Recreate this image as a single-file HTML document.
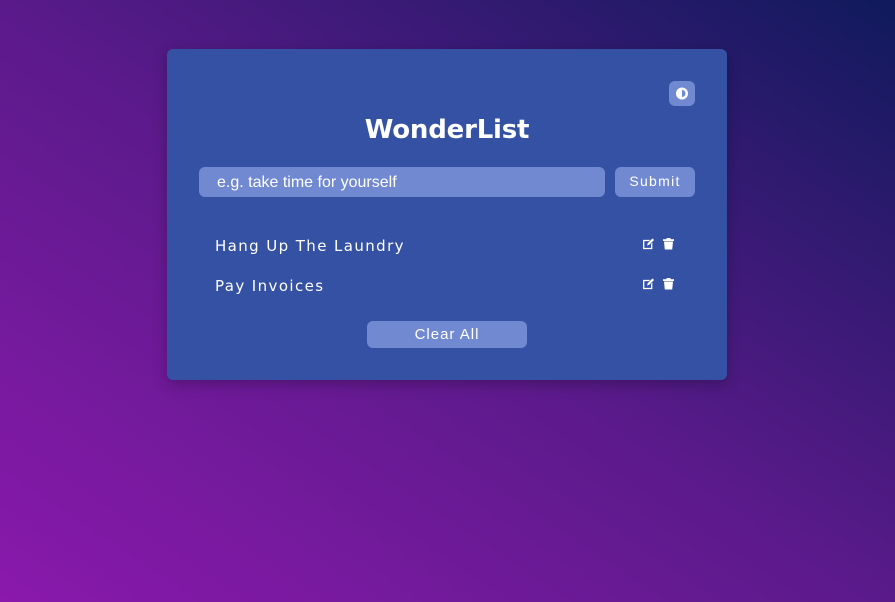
<!DOCTYPE html>
<html><head><style>
html,body{margin:0;width:895px;height:602px;overflow:hidden}
body{background:linear-gradient(to top right,#8a19ac 0%,#5a1a8a 50%,#101a5c 100%);font-family:"Liberation Sans","DejaVu Sans",sans-serif;position:relative}
.card{position:absolute;left:167px;top:49px;width:560px;height:331px;background:#3451a3;border-radius:6px;box-shadow:0 4px 14px rgba(0,0,0,.25)}
.tog{position:absolute;left:502px;top:32px;width:26px;height:25px;border-radius:6px;background:#7189d1}
h1{position:absolute;left:0;width:560px;top:66px;margin:0;text-align:center;color:#fff;font-family:"DejaVu Sans",sans-serif;font-size:26px;font-weight:bold;letter-spacing:-0.2px}
.inp{position:absolute;left:32px;top:118px;width:406px;height:30px;border-radius:6px;background:#7189d1;color:#fff;font-size:16px;line-height:31px;padding-left:18px;box-sizing:border-box}
.sub{position:absolute;left:448px;top:118px;width:80px;height:30px;border-radius:6px;background:#7189d1;color:#fff;font-size:14px;line-height:28px;text-align:center;letter-spacing:1.3px}
.item{position:absolute;left:48px;color:#fff;font-family:"DejaVu Sans",sans-serif;font-size:15px;letter-spacing:1.4px}
.ic{position:absolute;left:476px}
.clr{position:absolute;left:200px;top:272px;width:160px;height:27px;border-radius:6px;background:#7189d1;color:#fff;font-size:15px;line-height:27px;text-align:center;letter-spacing:1px}
</style></head><body>
<div class="card">
<div class="tog"><svg width="26" height="25" viewBox="0 0 26 25"><circle cx="13" cy="12.5" r="6" fill="#fff"/><path d="M13 9a3.5 3.5 0 0 1 0 7z" fill="#7189d1"/></svg></div>
<h1>WonderList</h1>
<div class="inp">e.g. take time for yourself</div>
<div class="sub">Submit</div>
<div class="item" style="top:188px">Hang Up The Laundry</div>
<div class="item" style="top:228px">Pay Invoices</div>
<svg class="ic" style="top:189px" width="32" height="12" viewBox="0 0 32 12"><rect x="0.7" y="2.5" width="8" height="8" fill="none" stroke="#fff" stroke-width="1.3"/><path d="M3.5 8l1-3 5-5 2 2-5 5z" fill="#fff" stroke="#3451a3" stroke-width=".6"/><rect x="20" y="1.2" width="11" height="1.8" fill="#fff"/><rect x="23.5" y="0" width="4" height="1.5" fill="#fff"/><path d="M21 3.5h9l-.8 8h-7.4z" fill="#fff"/></svg>
<svg class="ic" style="top:229px" width="32" height="12" viewBox="0 0 32 12"><rect x="0.7" y="2.5" width="8" height="8" fill="none" stroke="#fff" stroke-width="1.3"/><path d="M3.5 8l1-3 5-5 2 2-5 5z" fill="#fff" stroke="#3451a3" stroke-width=".6"/><rect x="20" y="1.2" width="11" height="1.8" fill="#fff"/><rect x="23.5" y="0" width="4" height="1.5" fill="#fff"/><path d="M21 3.5h9l-.8 8h-7.4z" fill="#fff"/></svg>
<div class="clr">Clear All</div>
</div>
</body></html>
